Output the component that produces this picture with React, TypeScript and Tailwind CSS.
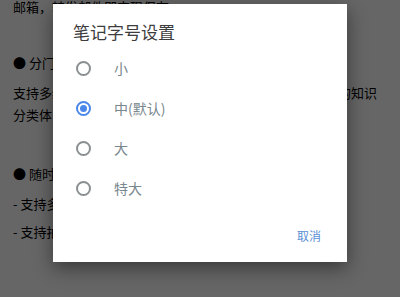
import { useState } from 'react';

const sizes = ['小', '中(默认)', '大', '特大'];

export default function App() {
  const [selected, setSelected] = useState(1);

  return (
    <div
      className="relative w-[400px] h-[297px] overflow-hidden bg-white"
      style={{ fontFamily: '"Noto Sans CJK SC", "Noto Sans", sans-serif' }}
    >
      {/* note content behind the dialog */}
      <div className="px-[13px] text-[13px] leading-[22px] text-black">
        <p className="mt-[-4px]">邮箱，转发邮件即实现保存。</p>
        <p className="mt-[34px]">● 分门别类</p>
        <p className="mt-[8px]">支持多级笔记本分类与标签管理，轻松构建属于你们自己的知识分类体系。</p>
        <p className="mt-[37px]">● 随时记录</p>
        <p className="mt-[8px]">- 支持多种格式的笔记内容</p>
        <p className="mt-[6px]">- 支持拍照、语音快速记录</p>
      </div>

      <div className="absolute inset-0 bg-black/60" />

      <div className="absolute left-[53px] top-[4px] w-[294px] h-[258px] bg-white shadow-[0_6px_18px_rgba(0,0,0,0.45)] flex flex-col">
        <h2 className="pt-4 pl-5 text-[17px] leading-6 text-[#3d3d3d]">笔记字号设置</h2>
        <div className="mt-1 flex flex-col">
          {sizes.map((label, i) => (
            <button
              key={label}
              onClick={() => setSelected(i)}
              className="h-10 flex items-center pl-[23px] text-left"
            >
              {selected === i ? (
                <span className="w-[15px] h-[15px] rounded-full border-2 border-[#4a87e8] flex items-center justify-center">
                  <span className="w-[7px] h-[7px] rounded-full bg-[#4a87e8]" />
                </span>
              ) : (
                <span className="w-[15px] h-[15px] rounded-full border-2 border-[#8a8f92]" />
              )}
              <span className="ml-[23px] text-[14px] text-[#78878d]">{label}</span>
            </button>
          ))}
        </div>
        <div className="flex-1 flex items-center justify-end pr-[26px] pt-[2px]">
          <button className="text-[12px] text-[#5a8fd4]">取消</button>
        </div>
      </div>
    </div>
  );
}
